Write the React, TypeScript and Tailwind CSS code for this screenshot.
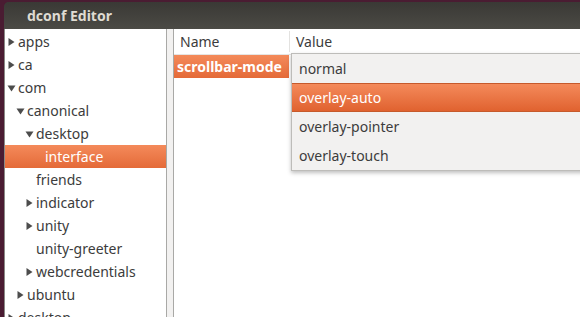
const font = { fontFamily: '"Noto Sans", "Open Sans", sans-serif' };

type Node = { label: string; depth: number; arrow?: "right" | "down"; selected?: boolean };

const tree: Node[] = [
  { label: "apps", depth: 0, arrow: "right" },
  { label: "ca", depth: 0, arrow: "right" },
  { label: "com", depth: 0, arrow: "down" },
  { label: "canonical", depth: 1, arrow: "down" },
  { label: "desktop", depth: 2, arrow: "down" },
  { label: "interface", depth: 3, selected: true },
  { label: "friends", depth: 2 },
  { label: "indicator", depth: 2, arrow: "right" },
  { label: "unity", depth: 2, arrow: "right" },
  { label: "unity-greeter", depth: 2 },
  { label: "webcredentials", depth: 2, arrow: "right" },
  { label: "ubuntu", depth: 1, arrow: "right" },
  { label: "desktop", depth: 0, arrow: "right" },
];

const indents = ["pl-[2px]", "pl-[11px]", "pl-[20px]", "pl-[29px]"];

function Arrow({ dir }: { dir?: "right" | "down" }) {
  if (!dir) return <span className="w-[11px] shrink-0" />;
  return (
    <span className="flex w-[11px] shrink-0 items-center">
      <svg width="9" height="10" viewBox="0 0 9 10">
        {dir === "right" ? (
          <path d="M1.5 1 L7.5 5 L1.5 9 Z" fill="#4c4c4c" />
        ) : (
          <path d="M0.5 2.5 L8.5 2.5 L4.5 8.5 Z" fill="#4c4c4c" />
        )}
      </svg>
    </span>
  );
}

const options = ["normal", "overlay-auto", "overlay-pointer", "overlay-touch"];

export default function App() {
  return (
    <div className="h-[317px] w-[580px] overflow-hidden bg-[#4a1c32] pl-[4px] pt-[2px] text-[14px]" style={font}>
      <div className="flex h-[315px] flex-col overflow-hidden rounded-tl-[5px] bg-[#3c3b37]">
        <div className="flex h-[27px] shrink-0 items-center bg-gradient-to-b from-[#3a3935] to-[#4b4a45] pl-[23px] font-bold text-[#dfdbd2]">
          dconf Editor
        </div>
        <div className="relative flex flex-1 overflow-hidden border-l border-[#8a8986] bg-white">
          <div className="w-[161px] shrink-0 bg-white pt-[1px] text-[#3c3c3c]">
            {tree.map((n, i) => (
              <div
                key={i}
                className={`flex h-[23px] items-center ${indents[n.depth]} ${
                  n.selected ? "bg-gradient-to-b from-[#f48a5a] to-[#e46a38] text-white" : ""
                }`}
              >
                <Arrow dir={n.arrow} />
                <span className="leading-none">{n.label}</span>
              </div>
            ))}
          </div>
          <div className="w-[8px] shrink-0 border-x border-[#a9a9a6] bg-[#f2f1f0]" />
          <div className="flex-1 bg-white">
            <div className="flex h-[26px] items-center border-b border-[#e6e5e3] text-[#3c3c3c]">
              <div className="w-[116px] border-r border-[#e3e2e0] pl-[6px]">Name</div>
              <div className="pl-[6px]">Value</div>
            </div>
            <div className="flex h-[23px] items-center">
              <div className="flex h-full w-[115px] items-center bg-gradient-to-b from-[#f48a5a] to-[#e46a38] pl-[3px] font-bold text-white">
                scrollbar-mode
              </div>
            </div>
          </div>
          <div className="absolute left-[286px] top-[24px] w-[300px] border border-[#bdbcb9] bg-[#f2f1f0] text-[#3c3c3c] shadow-[0_2px_4px_rgba(0,0,0,0.25)]">
            {options.map((o) => (
              <div
                key={o}
                className={`flex h-[29px] items-center pl-[7px] ${
                  o === "overlay-auto"
                    ? "border-y border-[#c65a2c] bg-gradient-to-b from-[#f48a5a] to-[#e0622f] text-white"
                    : ""
                }`}
              >
                {o}
              </div>
            ))}
          </div>
        </div>
      </div>
    </div>
  );
}
